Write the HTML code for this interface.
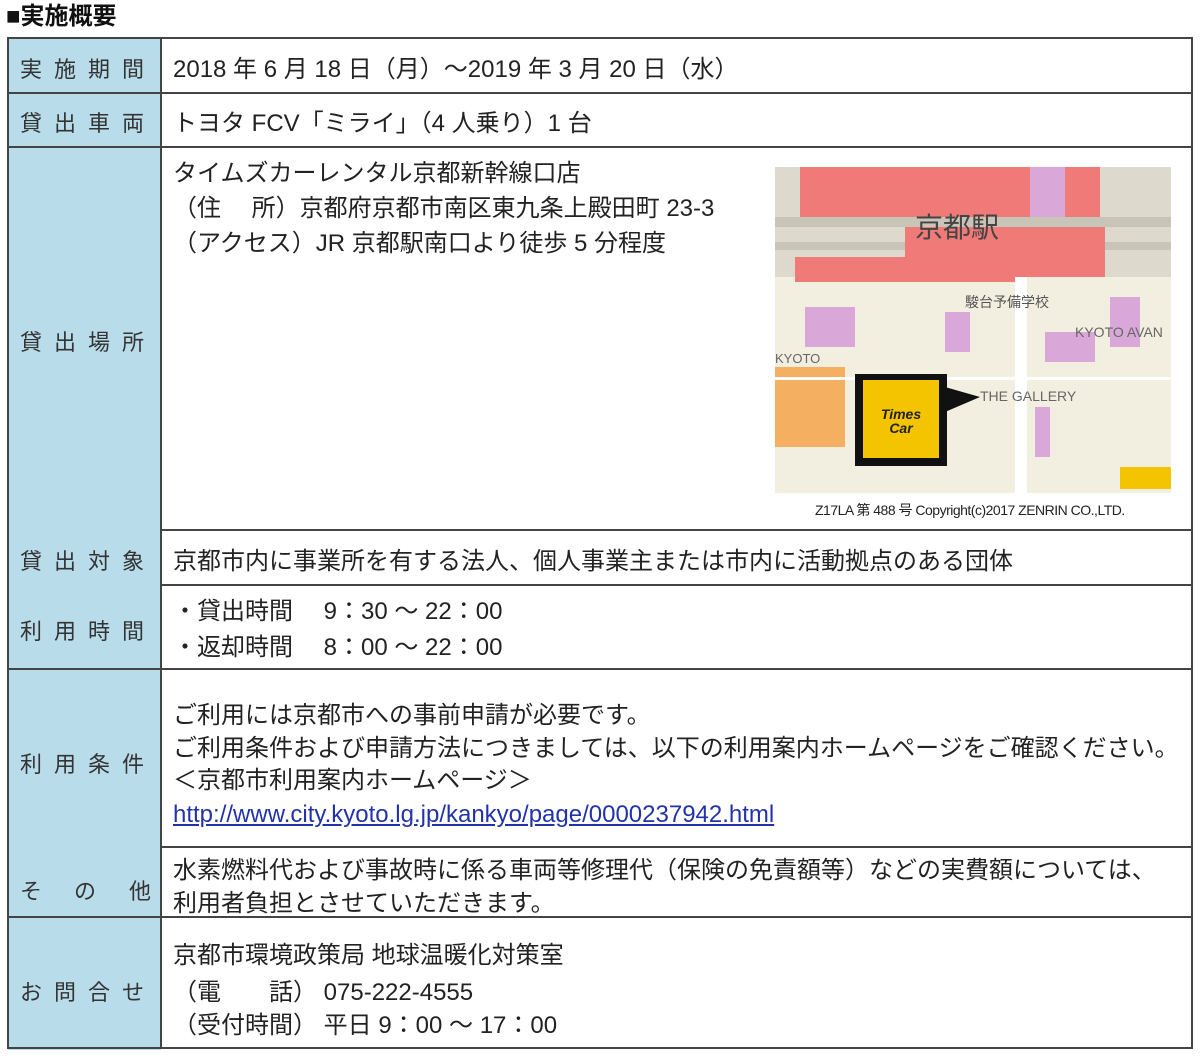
<!DOCTYPE html>
<html><head><meta charset="utf-8"><style>
body{margin:0;width:1200px;height:1062px;background:#fff;position:relative;overflow:hidden;font-family:"Liberation Sans","Noto Sans CJK JP",sans-serif;color:#222}
.a{position:absolute;white-space:nowrap}
.lb{position:absolute;left:8px;width:153px;background:#b9dcea}
.l{position:absolute;left:20px;font-size:22px;line-height:24px;letter-spacing:12px;color:#333;white-space:nowrap}
.t{position:absolute;left:173px;font-size:24px;line-height:24px;white-space:nowrap;color:#222}
.h{position:absolute;height:2px;background:#444}
.v{position:absolute;width:2px;background:#444}
</style></head><body>
<div class="a" style="left:6px;top:3px;font-size:24px;line-height:28px;font-weight:bold;color:#111">■実施概要</div>
<div class="lb" style="top:38px;height:1012px"></div>
<div class="h" style="left:8px;width:1184px;top:37px"></div>
<div class="h" style="left:8px;width:1184px;top:92px"></div>
<div class="h" style="left:8px;width:1184px;top:146px"></div>
<div class="h" style="left:161px;width:1031px;top:529px"></div>
<div class="h" style="left:161px;width:1031px;top:584px"></div>
<div class="h" style="left:8px;width:1184px;top:668px"></div>
<div class="h" style="left:161px;width:1031px;top:846px"></div>
<div class="h" style="left:8px;width:1184px;top:916px"></div>
<div class="h" style="left:8px;width:1184px;top:1047px"></div>
<div class="v" style="left:7px;top:37px;height:1012px"></div>
<div class="v" style="left:160px;top:37px;height:1012px"></div>
<div class="v" style="left:1191px;top:37px;height:1012px"></div>
<div class="l" style="top:58px">実施期間</div>
<div class="l" style="top:112px">貸出車両</div>
<div class="l" style="top:331px">貸出場所</div>
<div class="l" style="top:550px">貸出対象</div>
<div class="l" style="top:620px">利用時間</div>
<div class="l" style="top:753px">利用条件</div>
<div class="l" style="top:880px">そ</div>
<div class="l" style="top:880px;left:74px">の</div>
<div class="l" style="top:880px;left:129px">他</div>
<div class="l" style="top:981px">お問合せ</div>
<div class="t" style="top:58px">2018 年 6 月 18 日（月）～2019 年 3 月 20 日（水）</div>
<div class="t" style="top:112px">トヨタ FCV「ミライ」（4 人乗り）1 台</div>
<div class="t" style="top:162px">タイムズカーレンタル京都新幹線口店</div>
<div class="t" style="top:197px">（住　 所）京都府京都市南区東九条上殿田町 23-3</div>
<div class="t" style="top:232px">（アクセス）JR 京都駅南口より徒歩 5 分程度</div>
<div class="t" style="top:550px">京都市内に事業所を有する法人、個人事業主または市内に活動拠点のある団体</div>
<div class="t" style="top:600px">・貸出時間　 9：30 ～ 22：00</div>
<div class="t" style="top:636px">・返却時間　 8：00 ～ 22：00</div>
<div class="t" style="top:704px">ご利用には京都市への事前申請が必要です。</div>
<div class="t" style="top:737px">ご利用条件および申請方法につきましては、以下の利用案内ホームページをご確認ください。</div>
<div class="t" style="top:769px">＜京都市利用案内ホームページ＞</div>
<div class="t" style="top:803px;color:#2233aa;text-decoration:underline">http://www.city.kyoto.lg.jp/kankyo/page/0000237942.html</div>
<div class="t" style="top:859px">水素燃料代および事故時に係る車両等修理代（保険の免責額等）などの実費額については、</div>
<div class="t" style="top:892px">利用者負担とさせていただきます。</div>
<div class="t" style="top:944px">京都市環境政策局 地球温暖化対策室</div>
<div class="t" style="top:981px">（電　　話） 075-222-4555</div>
<div class="t" style="top:1014px">（受付時間） 平日 9：00 ～ 17：00</div>
<svg class="a" style="left:775px;top:167px" width="396" height="326" viewBox="0 0 396 326">
<rect width="396" height="326" fill="#f3efe0"/>
<rect x="0" y="0" width="396" height="110" fill="#ddd9cc"/>
<rect x="25" y="0" width="300" height="50" fill="#f07a78"/>
<rect x="255" y="0" width="35" height="110" fill="#d9a8d8"/>
<rect x="0" y="50" width="396" height="10" fill="#c8c4b8"/>
<rect x="0" y="75" width="396" height="8" fill="#c8c4b8"/>
<rect x="130" y="60" width="200" height="50" fill="#f07a78"/>
<rect x="20" y="90" width="230" height="25" fill="#f07a78"/>
<text x="140" y="70" font-size="28" fill="#444" font-family="Noto Sans CJK JP,sans-serif">京都駅</text>
<rect x="30" y="140" width="50" height="40" fill="#d9a8d8"/>
<rect x="170" y="145" width="25" height="40" fill="#d9a8d8"/>
<rect x="270" y="165" width="50" height="30" fill="#d9a8d8"/>
<rect x="335" y="130" width="30" height="50" fill="#d9a8d8"/>
<rect x="0" y="200" width="70" height="80" fill="#f4b060"/>
<rect x="260" y="240" width="15" height="50" fill="#d9a8d8"/>
<rect x="0" y="210" width="396" height="3" fill="#fff"/>
<rect x="240" y="110" width="12" height="216" fill="#fff"/>
<text x="300" y="170" font-size="14" fill="#666">KYOTO AVAN</text>
<text x="205" y="234" font-size="14" fill="#666">THE GALLERY</text>
<text x="0" y="196" font-size="13" fill="#666">KYOTO</text>
<text x="190" y="140" font-size="14" fill="#555" font-family="Noto Sans CJK JP,sans-serif">駿台予備学校</text>
<rect x="80" y="207" width="92" height="92" fill="#111"/>
<polygon points="170,220 205,230 170,245" fill="#111"/>
<rect x="88" y="213" width="76" height="78" fill="#f5c400"/>
<text x="126" y="252" font-size="14" font-style="italic" font-weight="bold" text-anchor="middle" fill="#222">Times</text>
<text x="126" y="266" font-size="14" font-style="italic" font-weight="bold" text-anchor="middle" fill="#222">Car</text>
<rect x="345" y="300" width="51" height="22" fill="#f5c400"/>
</svg>
<div class="a" style="left:815px;top:500px;font-size:14px;color:#222;letter-spacing:-0.5px">Z17LA 第 488 号 Copyright(c)2017 ZENRIN CO.,LTD.</div>
</body></html>
